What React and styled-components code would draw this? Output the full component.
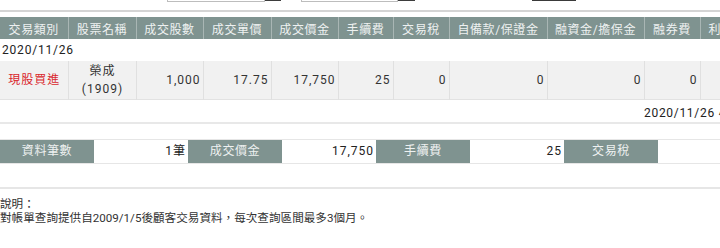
import React from 'react';
import styled, { createGlobalStyle } from 'styled-components';

const GlobalStyle = createGlobalStyle`
  html, body {
    margin: 0;
    padding: 0;
    background: #fff;
    overflow: hidden;
  }
  body {
    font-family: Roboto, "Noto Sans CJK TC", sans-serif;
    font-size: 12px;
    color: #333;
  }
`;

const Page = styled.div`
  width: 720px;
  overflow: hidden;
`;

const QueryBar = styled.div`
  display: flex;
  align-items: flex-end;
  margin-top: -20px;
  padding-bottom: 8px;
  border-bottom: 2px solid #d4d4d4;
`;

const QueryLabel = styled.span`
  width: 167px;
  height: 22px;
  line-height: 22px;
`;

const DateInput = styled.input`
  box-sizing: border-box;
  width: ${p => p.$w}px;
  height: 22px;
  border: 1px solid #bdbdbd;
  padding: 0 4px;
  margin: 0;
  outline: none;
`;

const PickerButton = styled.button`
  width: ${p => p.$w}px;
  height: 21px;
  margin: 0 ${p => p.$gap || 0}px 1px 0;
  border: 0;
  padding: 0;
  background: #3d3d3d;
`;

const SearchButton = styled.button`
  width: 44px;
  height: 21px;
  margin: 0 0 1px 117px;
  border: 0;
  background: #3a3a3a;
  color: #fff;
`;

const TableWrap = styled.div`
  margin-top: 5px;
  overflow: hidden;
  border-bottom: 2px solid #e8e8e8;
`;

const Grid = styled.table`
  border-collapse: collapse;
  table-layout: fixed;
  width: ${p => p.$w}px;
`;

const Head = styled.th`
  height: 22px;
  padding: 0;
  background: #7f9390;
  color: #eef1f1;
  font-weight: 400;
  letter-spacing: 0.6px;
  text-align: center;
  white-space: nowrap;
  border-left: 1px solid #a9b6b4;
  &:first-child { border-left: 0; }
`;

const DateRow = styled.tr`
  td {
    height: 22px;
    padding: 0 2px;
    letter-spacing: 0.8px;
    color: #222;
    white-space: nowrap;
  }
  td + td {
    padding-left: 0;
    letter-spacing: 0.7px;
  }
`;

const DataRow = styled.tr`
  background: #f1f1f1;
  border-bottom: 1px solid #e2e2e2;
`;

const Cell = styled.td`
  height: 38px;
  padding: 0 2px 0 3px;
  line-height: 18px;
  text-align: ${p => p.$align || 'right'};
  color: ${p => (p.$red ? '#d9262c' : '#333')};
  letter-spacing: 1px;
  white-space: nowrap;
  border-left: 1px solid #e0e0e0;
  &:first-child { border-left: 0; }
`;

const Summary = styled.div`
  display: flex;
  margin-top: 15px;
  border-top: 1px solid #e6e6e6;
  border-bottom: 1px solid #e6e6e6;
`;

const SumLabel = styled.div`
  flex: 0 0 94px;
  height: 23px;
  line-height: 23px;
  background: #7f9390;
  color: #eef1f1;
  text-align: center;
  letter-spacing: 0.6px;
`;

const SumValue = styled.div`
  flex: 0 0 94px;
  height: 23px;
  line-height: 23px;
  padding-right: 2px;
  box-sizing: border-box;
  text-align: right;
  letter-spacing: 1px;
  color: #222;
`;

const Notes = styled.div`
  margin-top: 23px;
  border-top: 2px solid #e6e6e6;
  padding-top: 8px;
  font-size: 11.6px;
  line-height: 14px;
  color: #333;
`;

const columns = [
  ['交易類別', 68],
  ['股票名稱', 68],
  ['成交股數', 67],
  ['成交單價', 68],
  ['成交價金', 67],
  ['手續費', 55],
  ['交易稅', 56],
  ['自備款/保證金', 98],
  ['融資金/擔保金', 97],
  ['融券費', 56],
  ['利息', 42],
  ['應收付金額', 90],
];

const trade = ['1,000', '17.75', '17,750', '25', '0', '0', '0', '0', '0', '-17,775'];

const totals = [
  ['資料筆數', '1筆'],
  ['成交價金', '17,750'],
  ['手續費', '25'],
  ['交易稅', '0'],
];

export default function App() {
  const tableWidth = columns.reduce((s, c) => s + c[1], 0);
  return (
    <Page>
      <GlobalStyle />
      <QueryBar>
        <QueryLabel>查詢期間</QueryLabel>
        <DateInput $w={98} defaultValue="2020/11/26" />
        <PickerButton $w={16} $gap={20} />
        <DateInput $w={97} defaultValue="2020/11/26" />
        <PickerButton $w={17} />
        <SearchButton>查詢</SearchButton>
      </QueryBar>

      <TableWrap>
        <Grid $w={tableWidth}>
          <colgroup>
            {columns.map(([name, w]) => <col key={name} style={{ width: w }} />)}
          </colgroup>
          <thead>
            <tr>
              {columns.map(([name]) => <Head key={name}>{name}</Head>)}
            </tr>
          </thead>
          <tbody>
            <DateRow>
              <td colSpan={columns.length}>2020/11/26</td>
            </DateRow>
            <DataRow>
              <Cell $align="center" $red>現股買進</Cell>
              <Cell $align="center">榮成<br />(1909)</Cell>
              {trade.map((v, i) => <Cell key={i}>{v}</Cell>)}
            </DataRow>
            <DateRow>
              <td colSpan={9} />
              <td colSpan={3}>2020/11/26 小計</td>
            </DateRow>
          </tbody>
        </Grid>
      </TableWrap>

      <Summary>
        {totals.map(([label, value]) => (
          <React.Fragment key={label}>
            <SumLabel>{label}</SumLabel>
            <SumValue>{value}</SumValue>
          </React.Fragment>
        ))}
      </Summary>

      <Notes>
        說明：<br />
        對帳單查詢提供自2009/1/5後顧客交易資料，每次查詢區間最多3個月。
      </Notes>
    </Page>
  );
}
